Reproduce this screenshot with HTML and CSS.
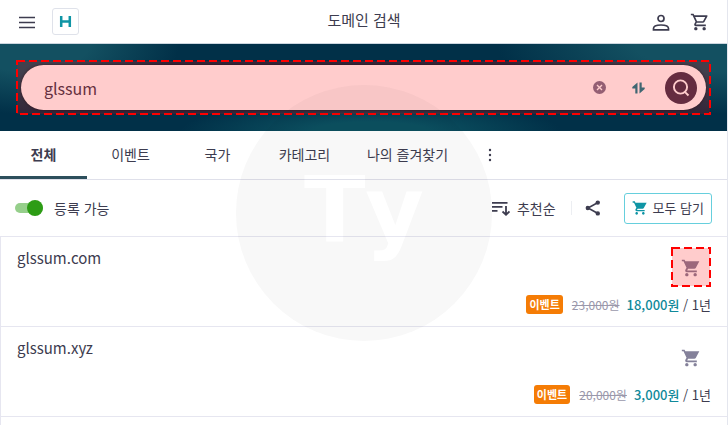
FILE: index.html
```html
<!DOCTYPE html>
<html lang="ko">
<head>
  <meta charset="UTF-8">
  <meta name="viewport" content="width=device-width, initial-scale=1">
  <title>도메인 검색</title>
  <link rel="stylesheet" href="styles.css">
</head>
<body>
  <svg class="defs" width="0" height="0" aria-hidden="true">
    <symbol id="cart" viewBox="0 0 24 24">
      <path d="M7 18c-1.100 0-2 .9-2 2s.9 2 2 2 2-.9 2-2-.9-2-2-2zM1 2v2h2l3.600 7.600-1.350 2.400C4.500 15.400 5.500 17 7 17h12v-2H7.400l1.100-2h7.450c.75 0 1.400-.4 1.750-1L22 4H5.200l-.95-2H1zm16 16c-1.100 0-2 .9-2 2s.9 2 2 2 2-.9 2-2-.9-2-2-2z"/>
    </symbol>
  </svg>

  <header class="header">
    <div class="header-left">
      <button class="icon-btn" type="button" aria-label="메뉴">
        <svg width="18" height="18" viewBox="0 0 18 18"><path d="M1 4.500h16M1 9.500h16M1 14.500h16" stroke="currentColor" stroke-width="1.700" fill="none"/></svg>
      </button>
      <a class="logo" href="#" aria-label="홈">
        <svg width="13" height="13" viewBox="0 0 13 13"><path d="M2.200 1v11M10.800 1v11M2.200 6.500h8.600" stroke="currentColor" stroke-width="2.500" fill="none"/></svg>
      </a>
    </div>
    <h1 class="title">도메인 검색</h1>
    <div class="header-right">
      <button class="icon-btn" type="button" aria-label="내 정보">
        <svg width="18" height="18" viewBox="0 0 18 18"><g fill="none" stroke="currentColor" stroke-width="1.700"><circle cx="9" cy="5.500" r="3"/><path d="M1.500 16.800v-1.400c0-2.200 3.200-3.400 7.500-3.400s7.500 1.200 7.500 3.400v1.400z"/></g></svg>
      </button>
      <button class="icon-btn" type="button" aria-label="장바구니">
        <svg width="20" height="20" viewBox="0 0 24 24" fill="currentColor"><path d="M15.550 13c.75 0 1.410-.41 1.750-1.030l3.580-6.490A.996.996 0 0 0 20.010 4H5.210l-.94-2H1v2h2l3.600 7.590-1.350 2.440C4.520 15.370 5.480 17 7 17h12v-2H7l1.100-2h7.450zM6.160 6h12.150l-2.760 5H8.530L6.160 6zM7 18c-1.100 0-1.990.9-1.990 2S5.900 22 7 22s2-.9 2-2-.9-2-2-2zm10 0c-1.100 0-1.990.9-1.990 2s.89 2 1.990 2 2-.9 2-2-.9-2-2-2z"/></svg>
      </button>
    </div>
  </header>

  <section class="hero">
    <div class="highlight search-area">
      <form class="search">
        <input class="search-input" type="text" value="glssum" aria-label="도메인 검색어">
        <button class="icon-btn clear" type="button" aria-label="지우기">
          <svg width="13" height="13" viewBox="0 0 13 13"><circle cx="6.500" cy="6.500" r="6.500" fill="currentColor"/><path d="M4 4l5 5M9 4l-5 5" stroke="#fff" stroke-width="1.400"/></svg>
        </button>
        <button class="icon-btn swap" type="button" aria-label="검색 전환">
          <svg width="13" height="12" viewBox="0 0 13 12"><path d="M5.500 11.500V.5L.3 5v1.500h3v5zM7.500.5v11l5.200-4.500V5.500h-3v-5z" fill="currentColor"/></svg>
        </button>
        <button class="search-btn" type="submit" aria-label="검색">
          <svg width="18" height="18" viewBox="0 0 18 18"><g fill="none" stroke="#fff" stroke-width="1.900"><circle cx="8.500" cy="8" r="6.600"/><path d="M12.300 12.300l4.200 4.200"/></g></svg>
        </button>
      </form>
      <svg class="marker" aria-hidden="true"><rect x="1" y="1"/></svg>
    </div>
  </section>

  <nav class="tabs">
    <a class="tab active" href="#">전체</a>
    <a class="tab" href="#">이벤트</a>
    <a class="tab" href="#">국가</a>
    <a class="tab" href="#">카테고리</a>
    <a class="tab wide" href="#">나의 즐겨찾기</a>
    <button class="icon-btn more" type="button" aria-label="더보기">
      <svg width="4" height="14" viewBox="0 0 4 14" fill="currentColor"><circle cx="2" cy="2" r="1.200"/><circle cx="2" cy="7" r="1.200"/><circle cx="2" cy="12" r="1.200"/></svg>
    </button>
  </nav>

  <div class="toolbar">
    <label class="switch">
      <input type="checkbox" checked>
      <span>등록 가능</span>
    </label>
    <div class="tools">
      <button class="sort" type="button">
        <svg width="18" height="15" viewBox="0 0 18 15"><path d="M0 1.800h15.500M0 5.800h10.500M0 9.800h5.500M14 5v8.500M10.500 10.500l3.500 3.200 3.500-3.200" fill="none" stroke="currentColor" stroke-width="1.800"/></svg>
        추천순
      </button>
      <button class="icon-btn share" type="button" aria-label="공유">
        <svg width="16" height="16" viewBox="0 0 16 16"><path d="M13 2.500L3 8l10 5.500" fill="none" stroke="currentColor" stroke-width="1.600"/><g fill="currentColor"><circle cx="12.800" cy="2.600" r="2.200"/><circle cx="2.800" cy="8" r="2.200"/><circle cx="12.800" cy="13.400" r="2.200"/></g></svg>
      </button>
      <button class="add-all" type="button">
        <svg width="16" height="16"><use href="#cart"/></svg>
        모두 담기
      </button>
    </div>
  </div>

  <ul class="list">
    <li class="row">
      <div class="row-top">
        <h2 class="domain">glssum.com</h2>
        <div class="highlight">
          <button class="add" type="button" aria-label="glssum.com 담기">
            <svg width="20" height="20"><use href="#cart"/></svg>
          </button>
          <svg class="marker" aria-hidden="true"><rect x="1" y="1"/></svg>
        </div>
      </div>
      <div class="price">
        <span class="badge">이벤트</span>
        <del>23,000원</del>
        <p><strong>18,000원</strong> / 1년</p>
      </div>
    </li>
    <li class="row">
      <div class="row-top">
        <h2 class="domain">glssum.xyz</h2>
        <button class="add" type="button" aria-label="glssum.xyz 담기">
          <svg width="20" height="20"><use href="#cart"/></svg>
        </button>
      </div>
      <div class="price">
        <span class="badge">이벤트</span>
        <del>20,000원</del>
        <p><strong>3,000원</strong> / 1년</p>
      </div>
    </li>
  </ul>

  <div class="watermark" aria-hidden="true">Ty</div>
</body>
</html>
```
FILE: styles.css
```css
* {
  box-sizing: border-box;
}

body {
  margin: 0;
  min-height: 100vh;
  display: flex;
  flex-direction: column;
  border-right: 1px solid #e4e6ee;
  background: #fff;
  color: #3d3c4f;
  font-family: "Noto Sans CJK KR", sans-serif;
  font-size: 14px;
  line-height: 20px;
}

h1, h2, p, ul {
  margin: 0;
  padding: 0;
}

button, input {
  font: inherit;
  color: inherit;
  border: 0;
  padding: 0;
  background: none;
}

button {
  cursor: pointer;
}

a {
  color: inherit;
  text-decoration: none;
}

svg {
  display: block;
  fill: currentColor;
}

.defs {
  position: absolute;
}

.icon-btn {
  display: flex;
  align-items: center;
  justify-content: center;
}

/* header */
.header {
  display: grid;
  grid-template-columns: 1fr auto 1fr;
  align-items: center;
  padding: 8px 17px 8px 18px;
  border-bottom: 1px solid #ccd6df;
}

.header-left, .header-right {
  display: flex;
  align-items: center;
  gap: 16px;
}

.header-right {
  justify-content: flex-end;
  gap: 20px;
}

.logo {
  display: flex;
  align-items: center;
  justify-content: center;
  width: 27px;
  height: 27px;
  border: 1px solid #dfe2ea;
  border-radius: 3px;
  color: #0f95a5;
}

.title {
  padding-bottom: 3px;
  font-size: 15px;
  font-weight: 400;
  line-height: 20px;
}

/* search */
.hero {
  padding: 16px;
  background:
    radial-gradient(ellipse 150px 70px at 4% 0, #135061 40%, transparent),
    radial-gradient(ellipse 230px 70px at 100% 0, #135061 40%, transparent),
    radial-gradient(ellipse 190px 30px at 51% 100%, #0b5060 30%, transparent),
    #013048;
}

.highlight {
  position: relative;
}

.marker {
  position: absolute;
  inset: 0;
  width: 100%;
  height: 100%;
  pointer-events: none;
}

.marker rect {
  width: calc(100% - 2px);
  height: calc(100% - 2px);
  fill: rgba(255, 0, 0, 0.2);
  stroke: #f00;
  stroke-width: 2px;
  stroke-dasharray: 8 4;
}

.search-area {
  padding: 5px;
}

.search {
  display: flex;
  align-items: center;
  height: 45px;
  padding: 0 9px 0 23px;
  border-radius: 23px;
  background: #fff;
  box-shadow: 0 0 3px rgba(0, 0, 0, 0.6);
}

.search-input {
  flex: 1;
  min-width: 0;
  height: 28px;
  font-size: 16px;
  outline: none;
}

.clear {
  margin-right: 26px;
  color: #7a7690;
}

.swap {
  margin-right: 20px;
  color: #10808f;
}

.search-btn {
  display: flex;
  align-items: center;
  justify-content: center;
  width: 32px;
  height: 32px;
  border-radius: 50%;
  background: #3f3850;
}

/* tabs */
.tabs {
  display: flex;
  height: 49px;
  border-bottom: 1px solid #dfe0ea;
}

.tab {
  display: flex;
  align-items: center;
  justify-content: center;
  width: 87px;
  padding-bottom: 3px;
}

.tab.wide {
  width: 119px;
}

.tab.active {
  font-weight: 700;
  box-shadow: inset 0 -3px #2d4f5c;
}

.more {
  width: 46px;
}

/* toolbar */
.toolbar {
  display: flex;
  align-items: center;
  justify-content: space-between;
  height: 56px;
  padding: 0 15px;
}

.switch {
  display: flex;
  align-items: center;
  gap: 11px;
}

.switch input {
  appearance: none;
  display: flex;
  align-items: center;
  justify-content: flex-end;
  width: 28px;
  height: 10px;
  margin: 0;
  border-radius: 5px;
  background: #96cf8b;
}

.switch input::before {
  content: "";
  width: 16px;
  height: 16px;
  border-radius: 50%;
  background: #2d9c15;
}

.switch input:not(:checked) {
  justify-content: flex-start;
}

.tools {
  display: flex;
  align-items: center;
}

.sort {
  display: flex;
  align-items: center;
  gap: 7px;
}

.share {
  height: 14px;
  margin-left: 15px;
  padding: 0 23px 0 13px;
  border-left: 1px solid #eceef2;
}

.add-all {
  display: flex;
  align-items: center;
  gap: 5px;
  height: 31px;
  padding: 0 7px;
  border: 1px solid #66cfdd;
  border-radius: 3px;
  font-size: 13px;
}

.add-all svg {
  color: #0f95a5;
}

/* results */
.list {
  flex: 1;
  list-style: none;
  border-top: 1px solid #e6e6f0;
  border-left: 1px solid #e6e6f0;
}

.row {
  padding: 10px 16px 12px;
  border-bottom: 1px solid #e6e6f0;
}

.row-top {
  display: flex;
  justify-content: space-between;
}

.domain {
  font-size: 15px;
  font-weight: 400;
  line-height: 22px;
}

.add {
  display: flex;
  align-items: center;
  justify-content: center;
  width: 40px;
  height: 40px;
  padding-top: 2px;
  color: #84819a;
}

.price {
  display: flex;
  align-items: center;
  justify-content: flex-end;
  margin-top: 8px;
  font-size: 13px;
  line-height: 19px;
}

.badge {
  margin-right: 9px;
  padding: 0 3px;
  border-radius: 3px;
  background: #f57c05;
  color: #fff;
  font-size: 11px;
  font-weight: 700;
}

.price del {
  margin-right: 7px;
  color: #9a98ab;
  font-size: 12px;
}

.price strong {
  color: #10899a;
  font-weight: 500;
}

.watermark {
  position: fixed;
  top: 50%;
  left: 50%;
  width: 256px;
  height: 256px;
  margin: -128px 0 0 -128px;
  border-radius: 50%;
  background: #f8f8f8;
  color: #fff;
  font-family: "DejaVu Sans", sans-serif;
  font-size: 90px;
  font-weight: 700;
  font-kerning: none;
  line-height: 250px;
  text-align: center;
  mix-blend-mode: multiply;
  pointer-events: none;
}
```
